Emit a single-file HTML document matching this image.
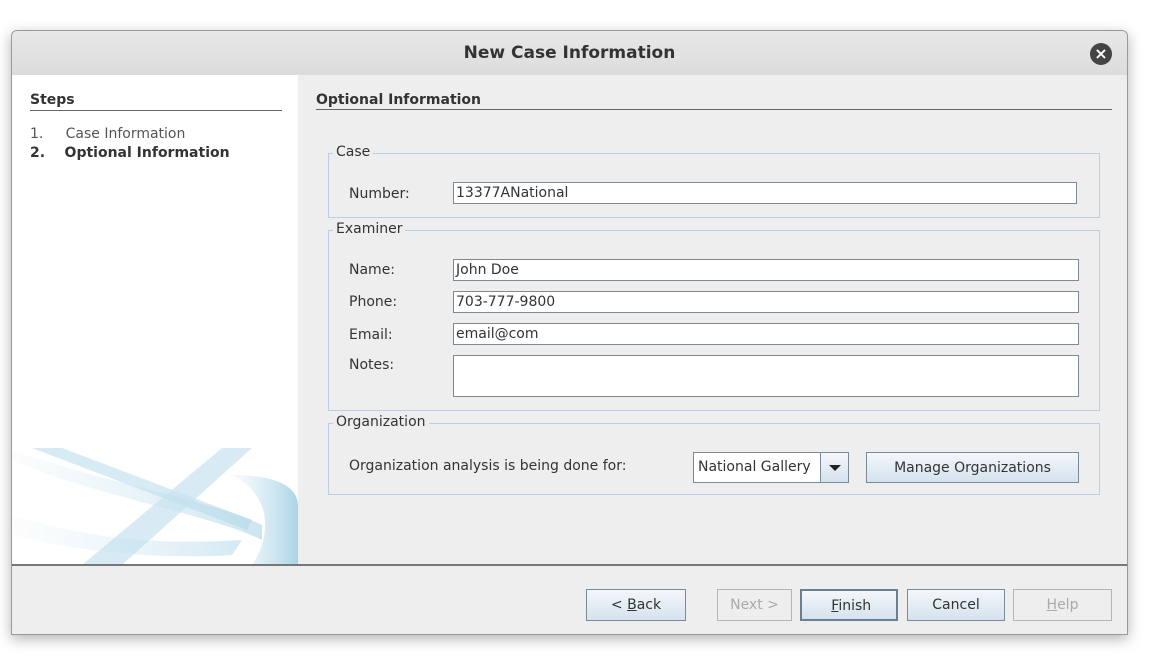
<!DOCTYPE html>
<html><head><style>
body{margin:0;width:1164px;height:660px;background:#fff;font-family:"DejaVu Sans","Liberation Sans",sans-serif;font-size:13px;color:#333;position:relative;overflow:hidden}
.a{position:absolute}
.win{left:11px;top:30px;width:1115px;height:603px;border:1px solid #999;border-radius:6px 6px 0 0;background:#eeeeee;box-shadow:0 4px 14px rgba(0,0,0,.3);overflow:hidden}
.title{left:0;top:0;width:1115px;height:44px;background:linear-gradient(#e8e8e8,#dcdcdc);text-align:center;line-height:44px;font-size:17px;font-weight:bold;color:#333}
.fs{border:1px solid #b8cfe5}
.lg{background:#eeeeee;padding:0 3px;font-size:14px}
.lbl{font-size:14px}
.tf{background:#fff;border:1px solid #7a8a99;height:20px;font-size:14px;line-height:20px;padding-left:2px;box-sizing:border-box}
.btn{height:32px;box-sizing:border-box;border:1px solid #7a8a99;background:linear-gradient(#f4f7fa,#d5e2ee);text-align:center;line-height:30px;font-size:14px}
.dis{border-color:#b5b5b5;background:#eeeeee;color:#aaa}
</style></head><body>
<div class="a win">
 <div class="a title">New Case Information</div>
 <div class="a" style="left:1078px;top:12px;width:22px;height:22px;border-radius:50%;background:#444;color:#fff;text-align:center;line-height:22px;font-size:16px;font-weight:bold">×</div>
 <div class="a" style="left:0;top:44px;width:286px;height:490px;background:#fff;overflow:hidden">
  <div class="a" style="left:18px;top:17px;font-weight:bold;font-size:14px">Steps</div>
  <div class="a" style="left:18px;top:35px;width:252px;height:1px;background:#666"></div>
  <div class="a" style="left:18px;top:51px;color:#555;font-size:14px">1.&nbsp;&nbsp;&nbsp;&nbsp;&nbsp;Case Information</div>
  <div class="a" style="left:18px;top:70px;font-weight:bold;font-size:14px">2.&nbsp;&nbsp;&nbsp;&nbsp;Optional Information</div>
  <svg class="a" style="left:0;top:370px" width="286" height="120">
   <defs><linearGradient id="g" x1="0" x2="1"><stop offset="0" stop-color="#d7ebf4" stop-opacity=".2"/><stop offset="1" stop-color="#a9d4e6"/></linearGradient></defs>
   <path d="M20 3 L50 3 L240 75 L235 85 Z" fill="#cde6f1" opacity=".8"/>
   <path d="M0 15 C80 50 200 70 250 95 L250 80 C200 55 100 40 0 5 Z" fill="url(#g)" opacity=".6"/>
   <path d="M70 120 L210 3 L240 3 L110 120 Z" fill="#c8e3ef" opacity=".7"/>
   <path d="M220 30 C270 30 286 45 286 60 L286 120 L240 120 C260 90 260 50 220 30 Z" fill="url(#g)"/>
   <path d="M0 70 C80 95 150 100 230 95 L220 110 C140 115 60 105 0 90 Z" fill="url(#g)" opacity=".5"/>
  </svg>
 </div>
 <div class="a" style="left:304px;top:61px;font-weight:bold;font-size:14px">Optional Information</div>
 <div class="a" style="left:304px;top:78px;width:796px;height:1px;background:#666"></div>

 <div class="a fs" style="left:316px;top:122px;width:770px;height:63px"></div>
 <div class="a lg" style="left:321px;top:113px">Case</div>
 <div class="a lbl" style="left:337px;top:155px">Number:</div>
 <div class="a tf" style="left:441px;top:151px;width:624px;height:22px">13377ANational</div>

 <div class="a fs" style="left:316px;top:199px;width:770px;height:179px"></div>
 <div class="a lg" style="left:321px;top:190px">Examiner</div>
 <div class="a lbl" style="left:337px;top:231px">Name:</div>
 <div class="a tf" style="left:441px;top:228px;width:626px;height:22px">John Doe</div>
 <div class="a lbl" style="left:337px;top:263px">Phone:</div>
 <div class="a tf" style="left:441px;top:260px;width:626px;height:22px">703-777-9800</div>
 <div class="a lbl" style="left:337px;top:296px">Email:</div>
 <div class="a tf" style="left:441px;top:292px;width:626px;height:22px">email@com</div>
 <div class="a lbl" style="left:337px;top:326px">Notes:</div>
 <div class="a tf" style="left:441px;top:324px;width:626px;height:42px"></div>

 <div class="a fs" style="left:316px;top:392px;width:770px;height:70px"></div>
 <div class="a lg" style="left:321px;top:383px">Organization</div>
 <div class="a lbl" style="left:337px;top:427px">Organization analysis is being done for:</div>
 <div class="a tf" style="left:681px;top:421px;width:156px;height:31px;line-height:29px;padding-left:4px">National Gallery</div>
 <div class="a" style="left:808px;top:422px;width:27px;height:29px;border-left:1px solid #7a8a99;background:linear-gradient(#f4f7fa,#d5e2ee)"><div class="a" style="left:8px;top:12px;border-left:6px solid transparent;border-right:6px solid transparent;border-top:6px solid #222"></div></div>
 <div class="a btn" style="left:854px;top:421px;width:213px;height:31px">Manage Organizations</div>

 <div class="a" style="left:0;top:533px;width:1115px;height:2px;background:#777"></div>
 <div class="a btn" style="left:574px;top:558px;width:100px">&lt; <u>B</u>ack</div>
 <div class="a btn dis" style="left:705px;top:558px;width:75px">Next &gt;</div>
 <div class="a btn" style="left:788px;top:558px;width:98px;border:2px solid #6a7f93">&nbsp;<u>F</u>inish</div>
 <div class="a btn" style="left:895px;top:558px;width:98px">Cancel</div>
 <div class="a btn dis" style="left:1001px;top:558px;width:99px"><u>H</u>elp</div>
</div>
</body></html>
